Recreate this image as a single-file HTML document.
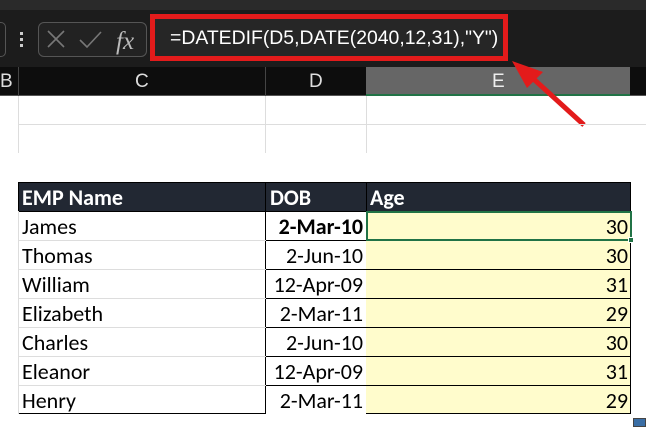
<!DOCTYPE html>
<html><head><style>
body{margin:0;width:646px;height:427px;overflow:hidden;background:#fff;position:relative;font-family:"Liberation Sans",Calibri,sans-serif}
div{position:absolute;box-sizing:border-box}
.t{font-family:"Carlito","Liberation Sans",sans-serif;font-size:22px;line-height:29px;color:#000}
</style></head><body>
<div style="left:0;top:0;width:646px;height:10px;background:#2a2a2a"></div>
<div style="left:0;top:10px;width:646px;height:57px;background:#1c1c1c"></div>
<div style="left:-10px;top:22px;width:16px;height:35px;border:1px solid #555;border-radius:5px"></div>
<div style="left:20px;top:32px;width:3px;height:3px;background:#ccc;box-shadow:0 6px 0 #ccc,0 12px 0 #ccc"></div>
<div style="left:38px;top:22px;width:109px;height:35px;border:1px solid #555;border-radius:6px;background:#222"></div>
<svg style="position:absolute;left:38px;top:22px" width="109" height="35"><path d="M10 9 L26 25 M26 9 L10 25" stroke="#777" stroke-width="1.6" fill="none"/><path d="M42 18 L49 25 L63 10" stroke="#777" stroke-width="1.6" fill="none"/><text x="78" y="27" font-family="Liberation Serif" font-style="italic" font-size="25" fill="#bbb">fx</text></svg>
<div style="left:150px;top:14px;width:358px;height:47px;border:5px solid #e31b1b;background:#262626"></div>
<div style="left:170px;top:24px;color:#fff;font-size:19.4px;line-height:28px;font-family:'Liberation Sans Narrow','Liberation Sans',sans-serif;">=DATEDIF(D5,DATE(2040,12,31),"Y")</div>
<div style="left:0;top:67px;width:646px;height:29px;background:#0d0d0d;border-bottom:1px solid #555"></div>
<div style="left:366px;top:67px;width:264px;height:29px;background:#666;border-bottom:2px solid #217346"></div>
<div style="left:18px;top:67px;width:1px;height:29px;background:#444"></div>
<div style="left:265px;top:67px;width:1px;height:29px;background:#444"></div>
<div style="left:0;top:67px;color:#ddd;font-size:19px;line-height:29px">B</div>
<div style="left:135px;top:67px;color:#ddd;font-size:19px;line-height:29px">C</div>
<div style="left:309px;top:67px;color:#ddd;font-size:19px;line-height:29px">D</div>
<div style="left:492px;top:67px;color:#eee;font-size:19px;line-height:29px">E</div>
<svg style="position:absolute;left:505px;top:58px" width="90" height="75"><path d="M79 67 L22 15" stroke="#e31b1b" stroke-width="5"/><path d="M7 3 L38 14 L22 30 Z" fill="#e31b1b"/></svg>
<div style="left:18px;top:96px;width:1px;height:57px;background:#ddd"></div>
<div style="left:265px;top:96px;width:1px;height:57px;background:#ddd"></div>
<div style="left:366px;top:96px;width:1px;height:57px;background:#ddd"></div>
<div style="left:18px;top:124px;width:628px;height:1px;background:#ddd"></div>
<div style="left:18px;top:182px;width:613px;height:30px;background:#222833;border:1px solid #000"></div>
<div style="left:265px;top:182px;width:1px;height:232px;background:#000"></div>
<div style="left:366px;top:182px;width:1px;height:232px;background:#000"></div>
<div class="t" style="left:22px;top:183px;color:#fff;font-weight:bold">EMP Name</div>
<div class="t" style="left:270px;top:183px;color:#fff;font-weight:bold">DOB</div>
<div class="t" style="left:370px;top:183px;color:#fff;font-weight:bold">Age</div>
<div style="left:366px;top:211px;width:265px;height:203px;background:#fffccc;border-right:1px solid #000;border-bottom:1px solid #000"></div>
<div style="left:18px;top:413px;width:248px;height:1px;background:#000"></div>
<div style="left:18px;top:211px;width:1px;height:203px;background:#ddd"></div>
<div style="left:18px;top:240px;width:248px;height:1px;background:#ddd"></div>
<div style="left:18px;top:269px;width:248px;height:1px;background:#ddd"></div>
<div style="left:18px;top:298px;width:248px;height:1px;background:#ddd"></div>
<div style="left:18px;top:327px;width:248px;height:1px;background:#ddd"></div>
<div style="left:18px;top:356px;width:248px;height:1px;background:#ddd"></div>
<div style="left:18px;top:385px;width:248px;height:1px;background:#ddd"></div>
<div style="left:266px;top:240px;width:365px;height:1px;background:#000"></div>
<div style="left:266px;top:269px;width:365px;height:1px;background:#000"></div>
<div style="left:266px;top:298px;width:365px;height:1px;background:#000"></div>
<div style="left:266px;top:327px;width:365px;height:1px;background:#000"></div>
<div style="left:266px;top:356px;width:365px;height:1px;background:#000"></div>
<div style="left:266px;top:385px;width:365px;height:1px;background:#000"></div>
<div style="left:366px;top:211px;width:266px;height:30px;border:2px solid #217346"></div>
<div style="left:628px;top:237px;width:6px;height:6px;background:#217346;border:1px solid #fff"></div>
<div class="t" style="left:22px;top:212px">James<br>Thomas<br>William<br>Elizabeth<br>Charles<br>Eleanor<br>Henry</div>
<div class="t" style="left:266px;top:212px;width:97px;text-align:right"><b>2-Mar-10</b><br>2-Jun-10<br>12-Apr-09<br>2-Mar-11<br>2-Jun-10<br>12-Apr-09<br>2-Mar-11</div>
<div class="t" style="left:367px;top:212px;width:261px;text-align:right">30<br>30<br>31<br>29<br>30<br>31<br>29</div>
<div style="left:633px;top:418px;width:13px;height:9px;background:#3a6ea5;border:1px solid #444"></div>
</body></html>
